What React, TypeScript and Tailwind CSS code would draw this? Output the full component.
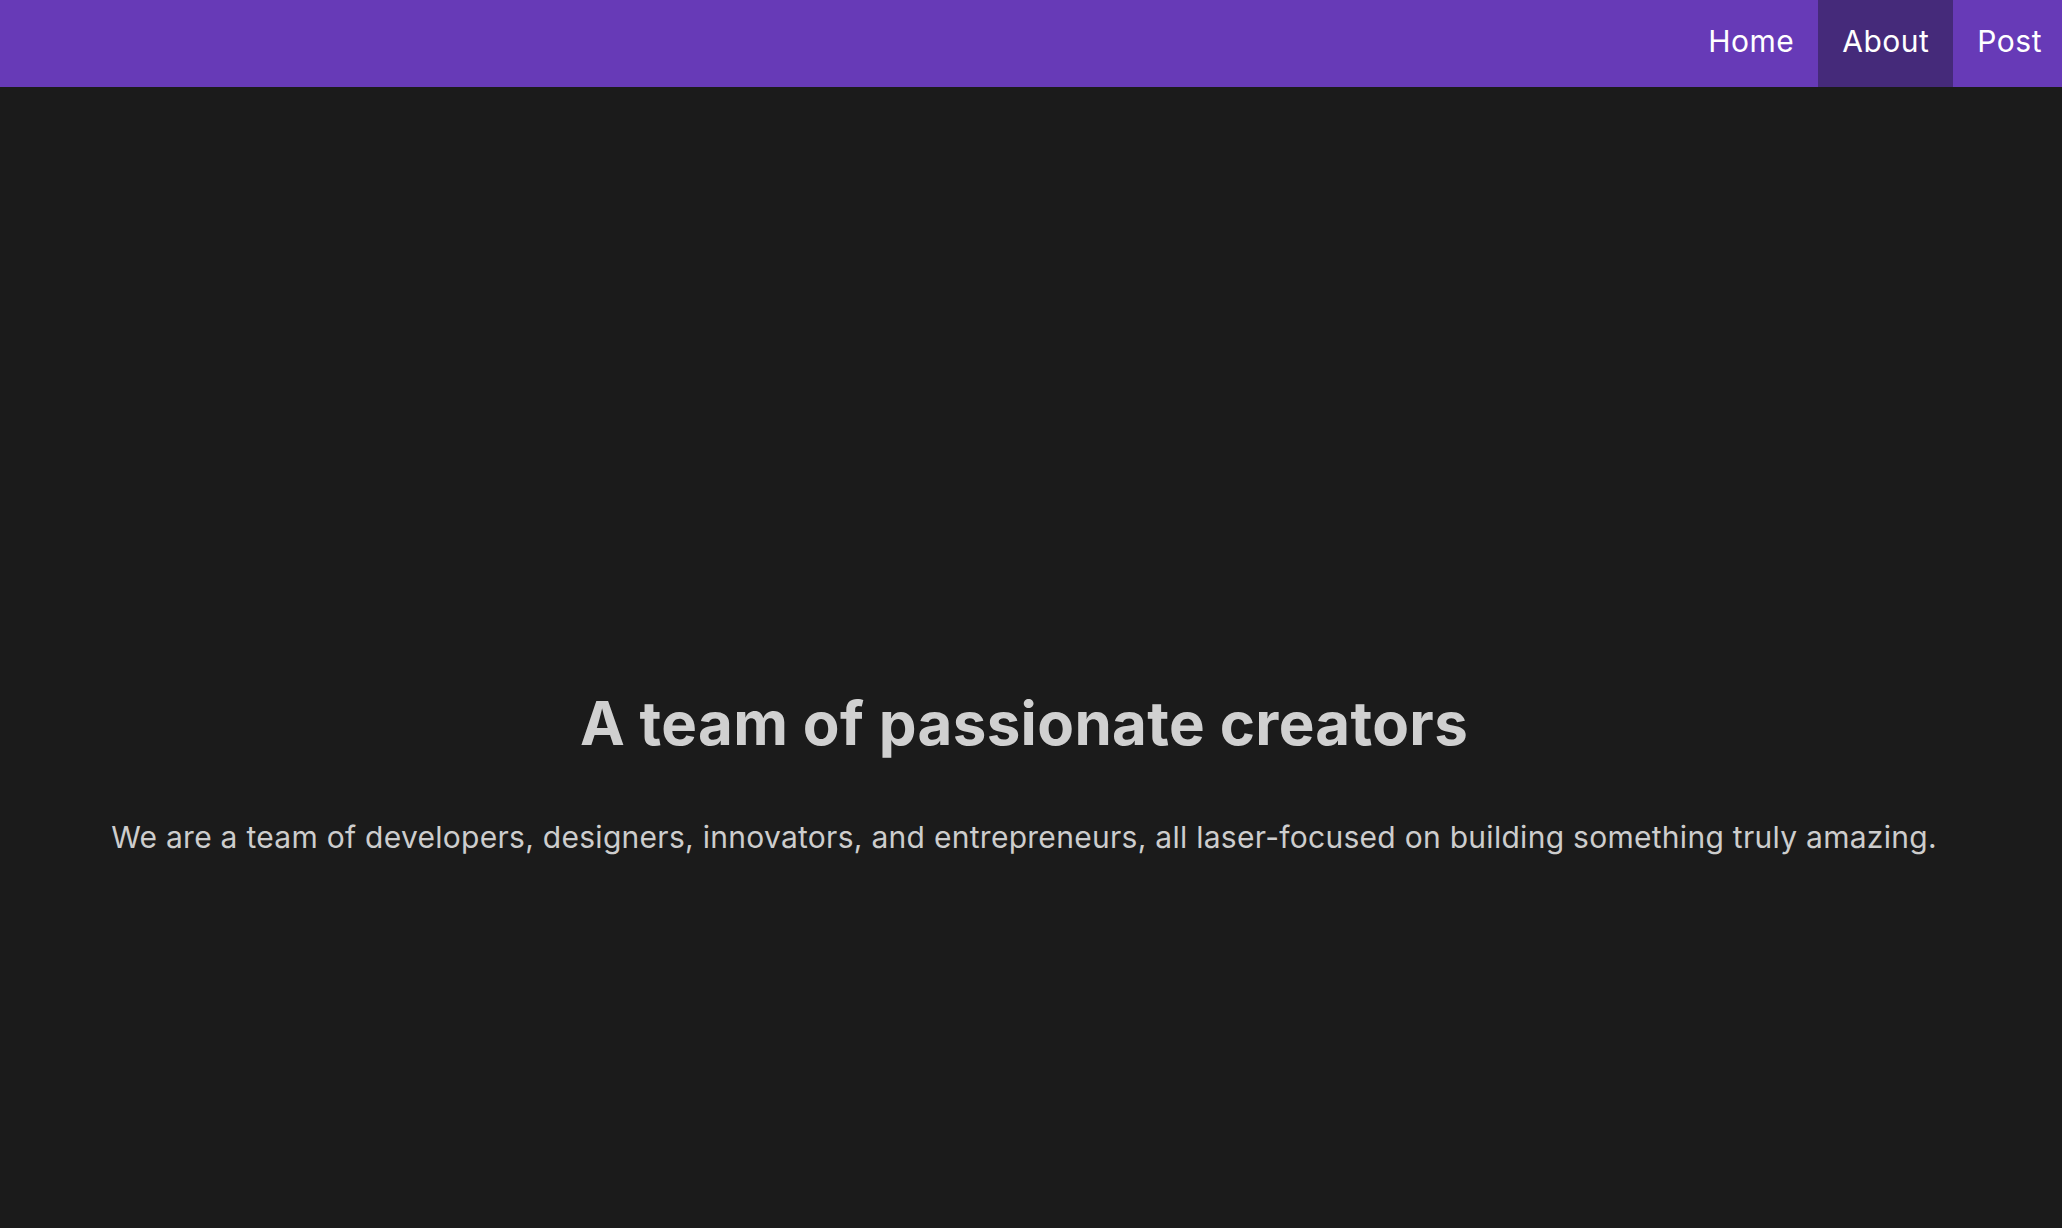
export default function App() {
  const links = [
    { label: "Home", active: false },
    { label: "About", active: true },
    { label: "Post", active: false },
  ];

  return (
    <div className="min-h-screen bg-[#1b1b1b] font-['Inter',sans-serif]">
      {/* Top nav */}
      <nav className="flex h-[87px] justify-end bg-[#673ab7]">
        {links.map((l, i) => (
          <a
            key={l.label}
            href="#"
            className={`flex items-center pl-6 pb-[4px] text-[30px] tracking-[0.5px] text-white ${i === links.length - 1 ? "pr-5" : "pr-6"} ${l.active ? "bg-[#452a7a]" : ""}`}
          >
            {l.label}
          </a>
        ))}
      </nav>

      {/* Hero */}
      <main className="flex flex-col items-center pt-[606px] pr-[14px] text-center">
        <h1 className="text-6xl font-bold tracking-[0.35px] text-[#d0d0d0]">A team of passionate creators</h1>
        <p className="mt-[66px] text-3xl tracking-[0.28px] text-[#cdcdcd]">
          We are a team of developers, designers, innovators, and entrepreneurs, all laser-focused on building something truly amazing.
        </p>
      </main>
    </div>
  );
}
